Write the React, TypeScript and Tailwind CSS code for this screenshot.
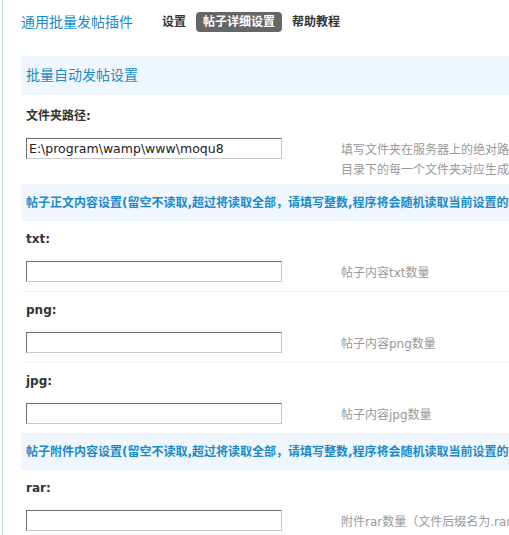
import React from "react";

const cjk = { fontFamily: '"DejaVu Sans", "Noto Sans CJK SC", sans-serif' };

function Label({ text }: { text: string }) {
  return (
    <div className="h-[36px] flex items-center pl-[5px] text-[12px] font-bold text-[#333]">
      {text}
    </div>
  );
}

function InputRow({ value, tips }: { value?: string; tips: React.ReactNode }) {
  return (
    <div className="flex pt-[4px] pb-[8px] border-b border-[#f0f3f6]">
      <div className="w-[320px] pl-[5px] shrink-0">
        <input
          readOnly
          value={value ?? ""}
          className="block w-[256px] h-[21px] border border-t-[#6e6e6e] border-l-[#6e6e6e] border-r-[#c8c8c8] border-b-[#c8c8c8] px-[2px] text-[12.5px] text-[#222] outline-none bg-white"
        />
      </div>
      <div className="pt-[2px] text-[12px] text-[#999] leading-[20px] whitespace-nowrap">{tips}</div>
    </div>
  );
}

function Partition({ text, big }: { text: string; big?: boolean }) {
  return (
    <div
      className={
        big
          ? "h-[39px] flex items-center pl-[5px] bg-[#f0f6fd] text-[14px] text-[#1b8ac8] whitespace-nowrap"
          : "h-[36px] flex items-center pl-[5px] bg-[#f0f6fd] text-[12px] font-bold text-[#1b8ac8] whitespace-nowrap"
      }
    >
      {text}
    </div>
  );
}

export default function App() {
  return (
    <div className="w-[509px] h-[535px] overflow-hidden bg-white flex" style={cjk}>
      <div className="w-[2px] shrink-0" />
      <div className="w-px shrink-0 bg-[#c9dce3]" />
      <div className="pl-[18px] w-[760px] shrink-0">
        <div className="h-[44px] flex items-center">
          <div className="text-[14px] text-[#1b8ac8]">通用批量发帖插件</div>
          <div className="flex items-center ml-[22px] text-[12px] font-bold text-[#333]">
            <span className="px-[7px] h-[20px] leading-[20px]">设置</span>
            <span className="ml-[3px] px-[7px] h-[20px] leading-[20px] rounded-[4px] bg-[#666] text-white">帖子详细设置</span>
            <span className="ml-[3px] px-[7px] h-[20px] leading-[20px]">帮助教程</span>
          </div>
        </div>
        <div className="mt-[12px]">
          <Partition big text="批量自动发帖设置" />
          <div className="h-[39px] flex items-center pt-[3px] pl-[5px] text-[12px] font-bold text-[#333]">文件夹路径:</div>
          <div className="flex pt-[4px] pb-[4px] border-b border-[#f0f3f6]">
            <div className="w-[320px] pl-[5px] shrink-0">
              <input
                readOnly
                value="E:\program\wamp\www\moqu8"
                className="block w-[256px] h-[21px] border border-t-[#6e6e6e] border-l-[#6e6e6e] border-r-[#c8c8c8] border-b-[#c8c8c8] px-[2px] text-[12.5px] text-[#222] outline-none bg-white"
              />
            </div>
            <div className="pt-[2px] text-[12px] text-[#999] leading-[20px] whitespace-nowrap">
              <div>填写文件夹在服务器上的绝对路径，该</div>
              <div>目录下的每一个文件夹对应生成一个帖子</div>
            </div>
          </div>
          <Partition text="帖子正文内容设置(留空不读取,超过将读取全部，请填写整数,程序将会随机读取当前设置的数量)" />
          <Label text="txt:" />
          <InputRow tips="帖子内容txt数量" />
          <Label text="png:" />
          <InputRow tips="帖子内容png数量" />
          <Label text="jpg:" />
          <InputRow tips="帖子内容jpg数量" />
          <Partition text="帖子附件内容设置(留空不读取,超过将读取全部，请填写整数,程序将会随机读取当前设置的数量)" />
          <Label text="rar:" />
          <InputRow tips="附件rar数量（文件后缀名为.rar）" />
        </div>
      </div>
    </div>
  );
}
